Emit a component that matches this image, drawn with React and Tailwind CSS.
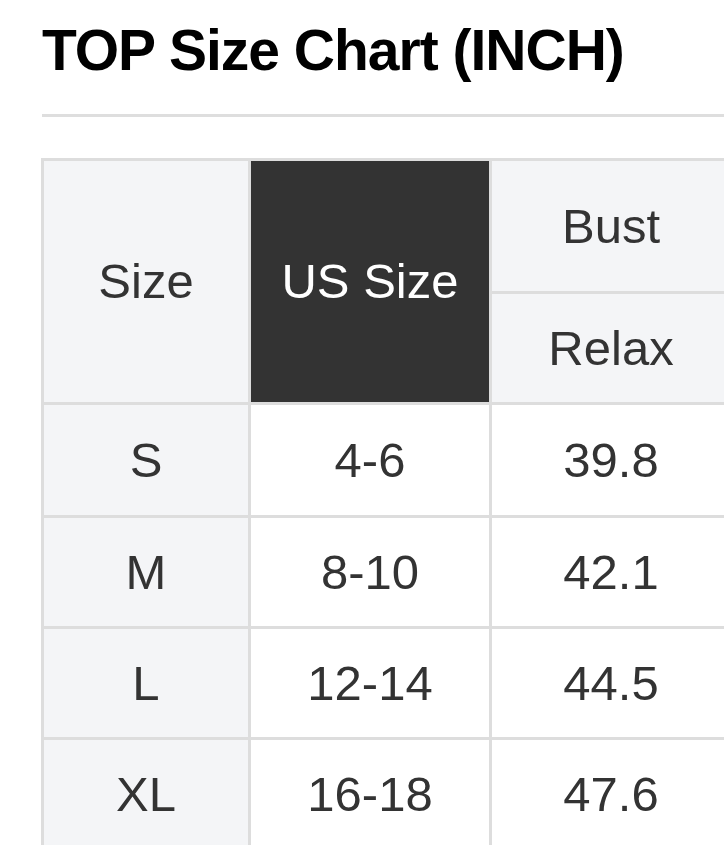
import React from 'react';

const rows = [
  { size: 'S', us: '4-6', bust: '39.8', h: 'h-[110px]' },
  { size: 'M', us: '8-10', bust: '42.1', h: 'h-[108px]' },
  { size: 'L', us: '12-14', bust: '44.5', h: 'h-[108px]' },
  { size: 'XL', us: '16-18', bust: '47.6', h: 'h-[108px]' },
];

const App = () => {
  return (
    <div className="w-[724px] h-[845px] overflow-hidden bg-white font-['Liberation_Sans',Arial,sans-serif] text-[#333]">
      <div className="pl-[42px] pt-[22px]">
        <h1 className="text-[57px] leading-none font-bold text-black tracking-[-1px] whitespace-nowrap">
          TOP Size Chart (INCH)
        </h1>
        <div className="mt-[35px] h-[3px] w-[700px] bg-[#dedede]" />
      </div>

      <div className="pl-[41px] pt-[41px]">
        <div className="w-[693px] grid grid-cols-[204px_238px_238px] gap-[3px] p-[3px] bg-[#dddddd] text-[49px] leading-none">
          <div className="row-span-2 bg-[#f4f5f7] flex items-center justify-center">Size</div>
          <div className="row-span-2 bg-[#333] text-white flex items-center justify-center">US Size</div>
          <div className="h-[130px] bg-[#f4f5f7] flex items-center justify-center">Bust</div>
          <div className="h-[108px] bg-[#f4f5f7] flex items-center justify-center">Relax</div>

          {rows.map(r => (
            <React.Fragment key={r.size}>
              <div className={`${r.h} bg-[#f4f5f7] flex items-center justify-center`}>{r.size}</div>
              <div className={`${r.h} bg-white flex items-center justify-center`}>{r.us}</div>
              <div className={`${r.h} bg-white flex items-center justify-center`}>{r.bust}</div>
            </React.Fragment>
          ))}
        </div>
      </div>
    </div>
  );
};

export default App;
